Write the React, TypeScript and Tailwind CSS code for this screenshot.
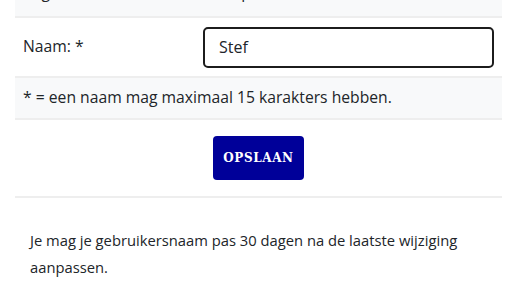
export default function App() {
  return (
    <div className="min-h-screen bg-white overflow-hidden font-['Open_Sans',sans-serif] text-[15.7px] text-[#212529]">
      <div className="mx-[15px] w-[487px]">
        {/* form table */}
        <div className="-mt-[32px]">
          <div className="flex items-center bg-[#f8f9fa] border-b-2 border-[#eeeeee] px-2 py-3 leading-6">
            <div className="w-[180px]">Registratie datum:</div>
            <div>04 september 2025 om 10:15:13</div>
          </div>
          <div className="flex items-center border-b-2 border-[#eeeeee] px-2 h-[60px]">
            <div className="w-[180px]">Naam: *</div>
            <input
              defaultValue="Stef"
              className="flex-1 h-[41px] rounded-[5px] border-2 border-[#1c1c1c] px-[14px] outline-none bg-white text-[16px]"
            />
          </div>
          <div className="flex items-center bg-[#f8f9fa] border-b-2 border-[#eeeeee] px-2 h-[42px]">
            * = een naam mag maximaal 15 karakters hebben.
          </div>
          <div className="flex justify-center border-b-2 border-[#eeeeee] py-4">
            <button className="h-[44px] w-[91px] rounded-[4px] bg-[#000099] text-white font-['DejaVu_Serif',serif] font-bold text-[12px] tracking-[0.05em]">
              OPSLAAN
            </button>
          </div>
        </div>
        <p className="pl-[15px] pt-[29px] text-[14.75px] leading-[27px]">
          Je mag je gebruikersnaam pas 30 dagen na de laatste wijziging aanpassen.
        </p>
      </div>
    </div>
  );
}
